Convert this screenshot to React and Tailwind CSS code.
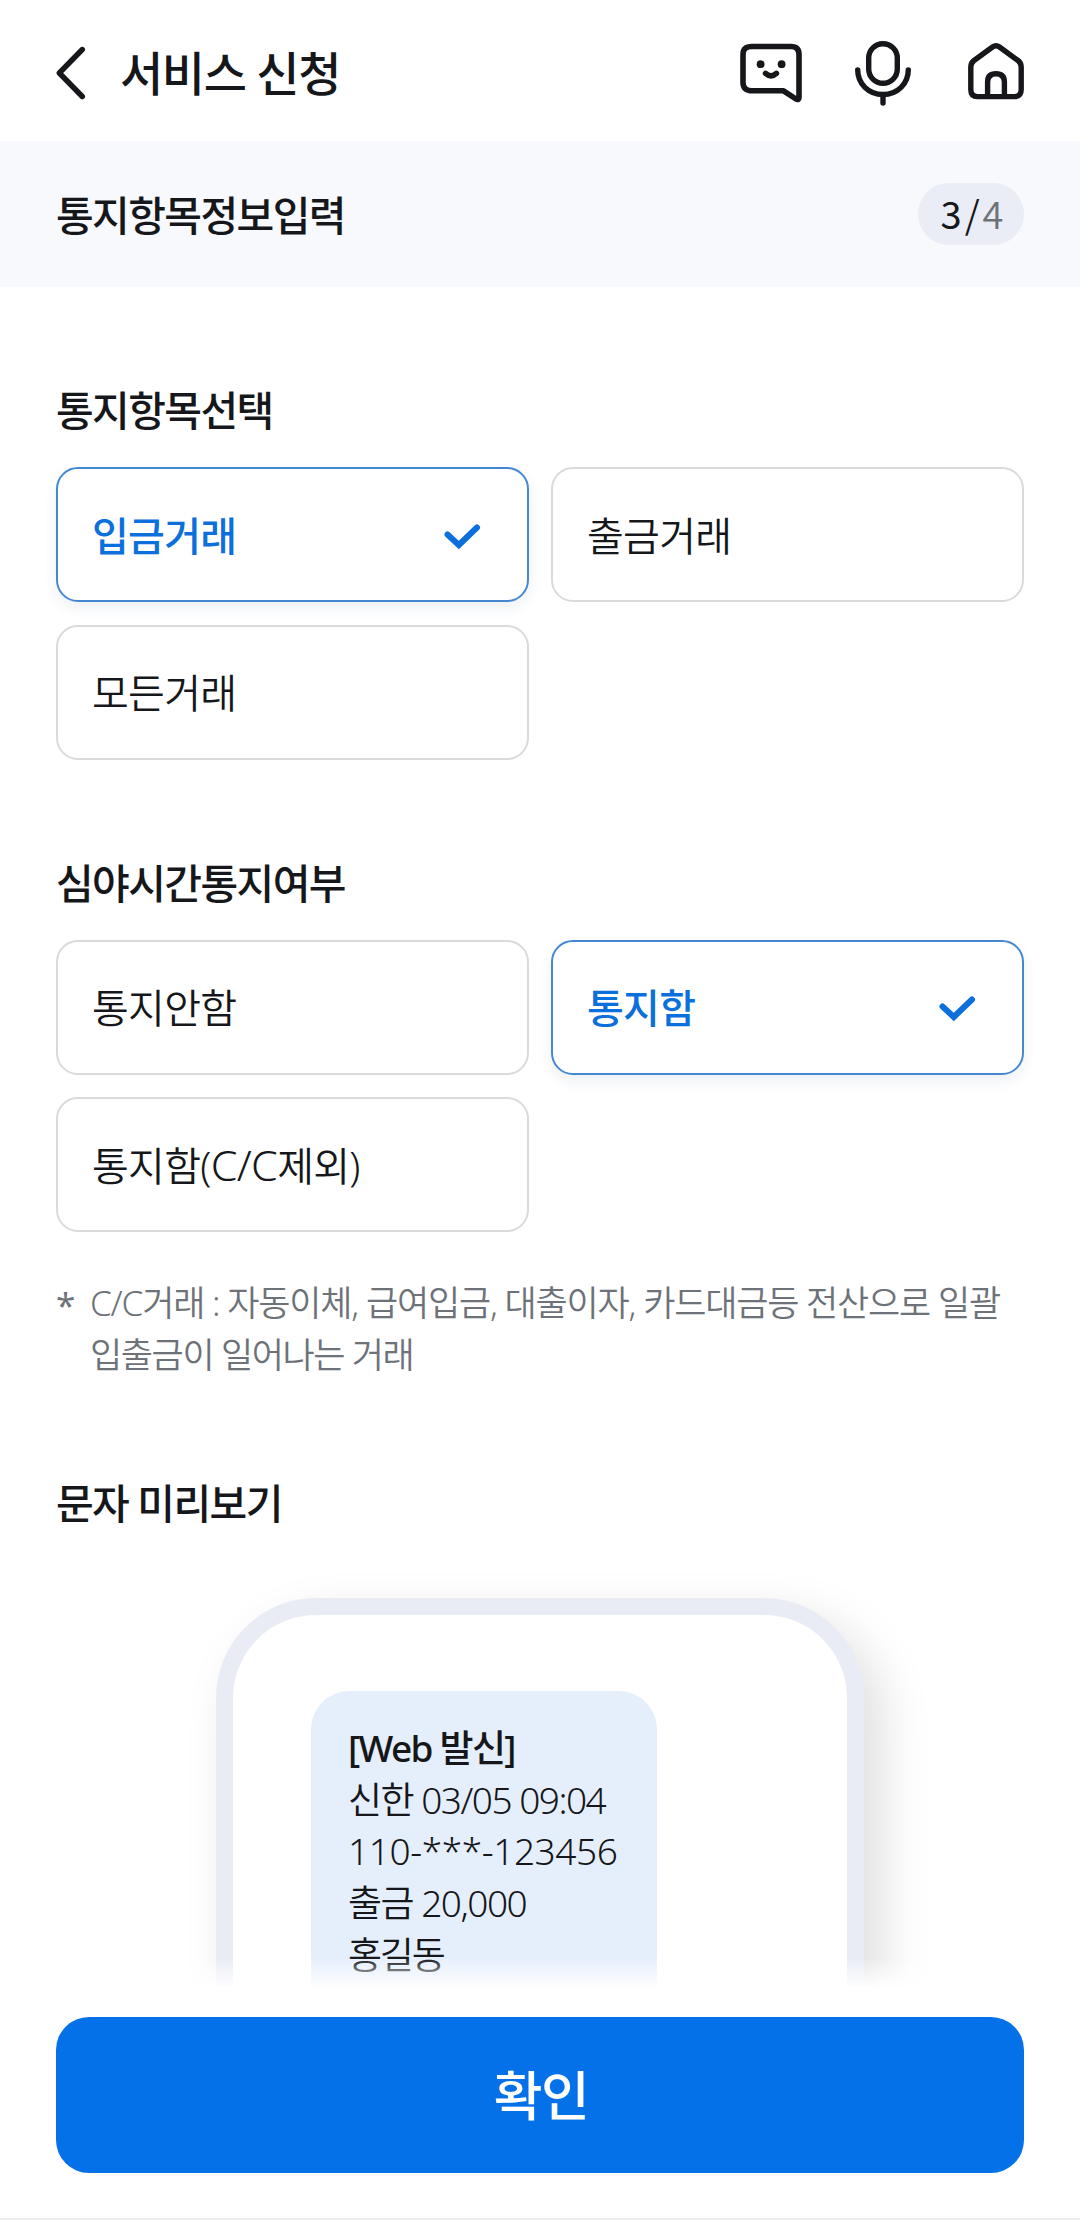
import { useState } from 'react';

const NOTICE_ITEMS = ['입금거래', '출금거래', '모든거래'];
const NIGHT_OPTIONS = ['통지안함', '통지함', '통지함(C/C제외)'];

const BackIcon = () => (
  <svg className="h-[56px] w-[34px]" viewBox="0 0 34 56" fill="none" stroke="currentColor" strokeWidth="5.4" strokeLinecap="round" strokeLinejoin="round">
    <path d="M26.300 4.500 3.300 28 26.300 51.500" />
  </svg>
);

const ChatIcon = () => (
  <svg className="h-[68px] w-[62px]" viewBox="0 0 62 68" fill="none" stroke="currentColor" strokeWidth="5.6" strokeLinecap="round" strokeLinejoin="round">
    <path d="M12 7.500H51Q59 7.500 59 15.500V58.500Q59 61.500 56 60L43.500 51.800H12Q3 51.800 3 43.500V15.500Q3 7.500 12 7.500Z" />
    <path d="M25.600 34.400Q31 39.200 36.400 34.400" />
    <circle cx="20.600" cy="25.200" r="3.900" fill="currentColor" stroke="none" />
    <circle cx="41.600" cy="25.200" r="3.900" fill="currentColor" stroke="none" />
  </svg>
);

const MicIcon = () => (
  <svg className="h-[68px] w-[58px]" viewBox="0 0 58 68" fill="none" stroke="currentColor" strokeWidth="5.4" strokeLinecap="round">
    <rect x="14.700" y="4.700" width="28.600" height="39.600" rx="14.300" />
    <path d="M3.700 31C3.700 44.500 14.500 55.500 29 55.500S54.300 44.500 54.300 31" />
    <path d="M29 57.500V64" />
  </svg>
);

const HomeIcon = () => (
  <svg className="h-[68px] w-[56px]" viewBox="0 0 56 68" fill="none" stroke="currentColor" strokeWidth="5.4" strokeLinejoin="round">
    <path d="M24.500 8 6 21.500Q2.800 24 2.800 28V50.500Q2.800 57.600 9.500 57.600H46.500Q53.200 57.600 53.200 50.500V28Q53.200 24 50 21.500L31.500 8Q28 5.600 24.500 8Z" />
    <path d="M19.600 57V43Q19.600 34.700 28 34.700T36.400 43V57" />
  </svg>
);

const CheckIcon = () => (
  <svg className="h-[28px] w-[38px]" viewBox="0 0 38 28" fill="none" stroke="#0b6fdc" strokeWidth="6" strokeLinecap="round">
    <path d="M4.500 12.500 15.800 23 34 5.500" />
  </svg>
);

const SectionTitle = ({ children }) => (
  <h3 className="text-[41px] font-medium leading-[60px] tracking-[-1.600px]">{children}</h3>
);

const OptionGroup = ({ options, selected, onSelect }) => (
  <div className="grid grid-cols-2 gap-x-[22px] gap-y-[22.500px]">
    {options.map((option) => (
      <button
        key={option}
        onClick={() => onSelect(option)}
        className={
          option === selected
            ? 'flex h-[135px] items-center justify-between rounded-[22px] border-2 border-[#4488d2] pl-[34px] pr-[46px] pt-[2px] text-[40px] font-medium tracking-[-0.700px] text-[#0b6fdc] shadow-[0_6px_14px_rgba(20,60,120,0.08)]'
            : 'flex h-[135px] items-center rounded-[22px] border-2 border-[#dadadb] px-[34px] pt-[2px] text-[40px] font-[350] tracking-[-0.700px]'
        }
      >
        {/* latin part is set slightly larger than the hangul around it */}
        <span>
          {option.split(/(C\/C)/).map((part, i) =>
            part === 'C/C' ? <span key={i} className="text-[43px] leading-none">{part}</span> : part
          )}
        </span>
        {option === selected && <CheckIcon />}
      </button>
    ))}
  </div>
);

const App = () => {
  const [noticeItem, setNoticeItem] = useState('입금거래');
  const [nightOption, setNightOption] = useState('통지함');

  return (
    <div className="relative flex h-[2220px] w-[1080px] flex-col overflow-hidden bg-white font-['Noto_Sans','Noto_Sans_CJK_KR',sans-serif] text-[#15171a]">
      <header className="flex h-[141px] shrink-0 items-center justify-between px-[56px] pt-[4px]">
        <div className="flex items-center gap-[30px]">
          <button><BackIcon /></button>
          <h1 className="text-[47px] font-medium leading-[60px] tracking-[-1.400px]">서비스 신청</h1>
        </div>
        <div className="flex items-center pt-[1px]">
          <button><ChatIcon /></button>
          <button className="ml-[52px]"><MicIcon /></button>
          <button className="ml-[56px]"><HomeIcon /></button>
        </div>
      </header>

      <div className="flex h-[146px] shrink-0 items-center justify-between bg-[#f7f9fd] px-[56px]">
        <h2 className="pt-[2px] text-[41px] font-medium leading-[60px] tracking-[-1.600px]">통지항목정보입력</h2>
        <div className="flex h-[62px] w-[106px] items-center justify-center gap-[3px] rounded-full bg-[#eaedf5] pb-[3px] pl-[2px] font-['Noto_Sans_CJK_KR',sans-serif] text-[38px] leading-[60px]">
          <span>3</span>
          <span className="font-[350]">/</span>
          <span className="font-[350] text-[#6d7278]">4</span>
        </div>
      </div>

      <main className="flex flex-col px-[56px]">
        <section className="pt-[93px]">
          <SectionTitle>통지항목선택</SectionTitle>
          <div className="mt-[27px]">
            <OptionGroup options={NOTICE_ITEMS} selected={noticeItem} onSelect={setNoticeItem} />
          </div>
        </section>

        <section className="pt-[93px]">
          <SectionTitle>심야시간통지여부</SectionTitle>
          <div className="mt-[27px]">
            <OptionGroup options={NIGHT_OPTIONS} selected={nightOption} onSelect={setNightOption} />
          </div>
          <div className="mt-[45px] flex text-[35px] font-[350] leading-[51.500px] tracking-[-1.400px] text-[#6d7278]">
            <span className="w-[34px] shrink-0 pt-[2px] font-normal">*</span>
            <p className="whitespace-nowrap">
              <span className="tracking-[-1.200px]">
                C/C거래 : 자동이체, 급여입금, 대출이자, 카드대금등 전산으로 일괄
              </span>
              <br />
              입출금이 일어나는 거래
            </p>
          </div>
        </section>

        <section className="pt-[93px]">
          <SectionTitle>문자 미리보기</SectionTitle>
          <div className="ml-[160px] mt-[65px] h-[700px] w-[648px] rounded-[100px] border-[17px] border-[#e9ecf5] bg-white pl-[78px] pt-[76px] shadow-[18px_20px_50px_rgba(0,0,0,0.13)]">
            <div className="h-[500px] w-[346px] whitespace-nowrap rounded-[38px] bg-[#e5effc] px-[37px] pt-[31px] text-[37px] font-[350] leading-[51.700px] tracking-[-1.500px]">
              <p className="font-medium tracking-[-1.700px]">[Web 발신]</p>
              <p>신한 03/05 09:04</p>
              <p className="tracking-[-0.400px]">110-***-123456</p>
              <p>출금 20,000</p>
              <p className="tracking-[-2.200px]">홍길동</p>
            </div>
          </div>
        </section>
      </main>

      {/* fixed bottom bar, content fades out underneath */}
      <div className="absolute inset-x-0 bottom-0 border-b-2 border-[#eeeeef]">
        <div className="h-[30px] bg-gradient-to-b from-white/0 to-white" />
        <div className="bg-white px-[56px] pb-[45px] pt-[29px]">
          <button className="h-[156px] w-full rounded-[33px] bg-[#0471e9] pl-[2px] pt-[2px] text-[53px] font-medium tracking-[-1.500px] text-white">
            확인
          </button>
        </div>
      </div>
    </div>
  );
};

export default App;
